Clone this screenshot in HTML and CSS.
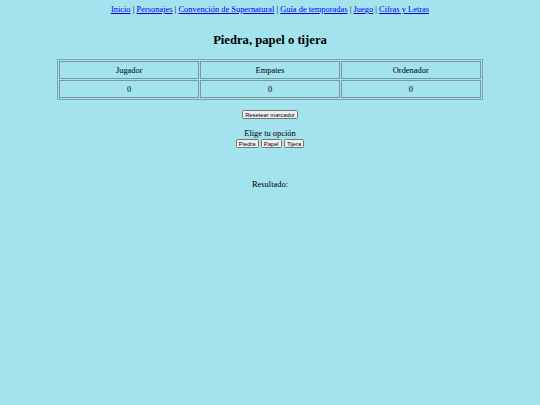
FILE: index.html
```html
<!DOCTYPE html>
<html lang="es">
<head>
<meta charset="utf-8">
<title>Piedra, papel o tijera</title>
<link rel="stylesheet" href="styles.css">
</head>
<body>
<nav class="nav">
<a href="#">Inicio</a> | <a href="#">Personajes</a> | <a href="#">Convención de Supernatural</a> | <a href="#">Guía de temporadas</a> | <a href="#">Juego</a> | <a href="#">Cifras y Letras</a>
</nav>
<h2 class="title">Piedra, papel o tijera</h2>
<table class="score">
<tr><td>Jugador</td><td>Empates</td><td>Ordenador</td></tr>
<tr><td>0</td><td>0</td><td>0</td></tr>
</table>
<p class="reset"><button class="btn">Resetear marcador</button></p>
<p class="choose">Elige tu opción<br><button class="btn">Piedra</button> <button class="btn">Papel</button> <button class="btn">Tijera</button></p>
<p class="result">Resultado:</p>
</body>
</html>
```
FILE: styles.css
```css
html {
  background: #a2e3ed;
}
body {
  margin: 4.2px;
  font-family: "Liberation Serif", serif;
  font-size: 8.44px;
  color: #000;
  text-align: center;
}
.nav a {
  color: #0000ee;
}
.title {
  font-size: 12.65px;
  margin: 19px 0 10.5px;
}
.score {
  width: 80%;
  margin: 0 auto;
  border: 1px solid #7ea3ab;
  border-spacing: 1.05px;
}
.score td {
  border: 1px solid #7a989f;
  padding: 3.16px;
  text-align: center;
  width: 33%;
}
.reset {
  margin: 8.4px 0;
}
.btn {
  font-family: "Liberation Sans", sans-serif;
  font-size: 5.8px;
  padding: 0.5px 2.1px;
  border: 1px solid #767676;
  border-radius: 1.5px;
  background: #efefef;
  color: #000;
}
.choose {
  margin: 8.4px 0;
}
.result {
  margin-top: 30.6px;
}
```
